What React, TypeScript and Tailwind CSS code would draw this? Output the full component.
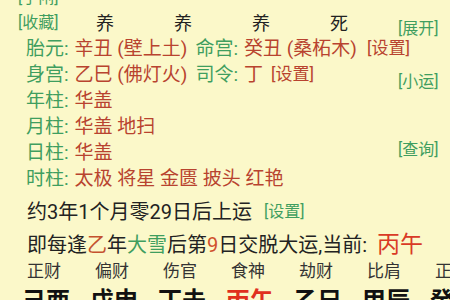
const green = "text-[#3f9e5f]";
const red = "text-[#b8432f]";

const shensha = [
  { label: "年柱:", items: ["华盖"] },
  { label: "月柱:", items: ["华盖", "地扫"] },
  { label: "日柱:", items: ["华盖"] },
  { label: "时柱:", items: ["太极", "将星", "金匮", "披头", "红艳"] },
];

const shishen = ["正财", "偏财", "伤官", "食神", "劫财", "比肩", "正官"];
const dayun = ["己酉", "戊申", "丁未", "丙午", "乙巳", "甲辰", "癸卯"];

export default function App() {
  return (
    <div className="w-[450px] h-[300px] overflow-hidden bg-[#fbf8c9] font-[family-name:Roboto,'Noto_Sans_CJK_SC',sans-serif]">
      <div className="-mt-[14px] flex">
        {/* left column */}
        <div className="flex-1 min-w-0 flex flex-col">
          <div className={`h-[24px] flex items-center pl-[18px] text-[16px] ${green}`}>[手闸]</div>
          <div className="h-[26px] flex items-center pl-[18px]">
            <span className={`text-[16px] w-[48px] ${green}`}>[收藏]</span>
            <div className="flex text-[18px] text-[#222]">
              {["养", "养", "养", "死"].map((c, i) => (
                <span key={i} className="w-[78px] text-center">
                  {c}
                </span>
              ))}
            </div>
          </div>
          <div className="h-[26px] flex items-center pl-[26px] text-[19px] whitespace-nowrap">
            <span className={green}>胎元: </span>
            <span className={`${red} ml-[6px]`}>辛丑 (壁上土)</span>
            <span className={`${green} ml-[8px]`}>命宫: </span>
            <span className={`${red} ml-[6px]`}>癸丑 (桑柘木)</span>
            <span className={`${red} ml-[10px] text-[17px]`}>[设置]</span>
          </div>
          <div className="h-[26px] flex items-center pl-[26px] text-[19px] whitespace-nowrap">
            <span className={green}>身宫: </span>
            <span className={`${red} ml-[6px]`}>乙巳 (佛灯火)</span>
            <span className={`${green} ml-[8px]`}>司令: </span>
            <span className={`${red} ml-[6px]`}>丁</span>
            <span className={`${red} ml-[8px] text-[17px]`}>[设置]</span>
          </div>
          {shensha.map((row) => (
            <div key={row.label} className="h-[26px] flex items-center pl-[26px] text-[19px] whitespace-nowrap">
              <span className={green}>{row.label}</span>
              <span className={`${red} ml-[6px]`}>{row.items.join(" ")}</span>
            </div>
          ))}
        </div>
        {/* right column */}
        <div className={`w-[52px] shrink-0 flex flex-col text-[16px] whitespace-nowrap ${green}`}>
          <div className="mt-[34px] h-[18px] leading-[18px]">[展开]</div>
          <div className="mt-[35px] h-[18px] leading-[18px]">[小运]</div>
          <div className="mt-[50px] h-[18px] leading-[18px]">[查询]</div>
        </div>
      </div>

      <div className="mt-[5px] h-[30px] flex items-center pl-[27px] text-[20px] text-[#222] whitespace-nowrap">
        约3年1个月零29日后上运
        <span className={`ml-[12px] text-[16px] ${green}`}>[设置]</span>
      </div>
      <div className="mt-[3px] h-[30px] flex items-center pl-[27px] text-[20px] text-[#222] whitespace-nowrap">
        即每逢<span className="text-[#c4512f]">乙</span>年<span className={green}>大雪</span>后第
        <span className="text-[#d0502c]">9</span>日交脱大运,当前:
        <span className="ml-[10px] text-[23px] text-[#d93a26]">丙午</span>
      </div>
      <div className="h-[24px] flex items-center pl-[27px] gap-[33px] text-[17px] text-[#333] whitespace-nowrap">
        {shishen.map((s, i) => (
          <span key={i} className="w-[35px] shrink-0">
            {s}
          </span>
        ))}
      </div>
      <div className="mt-[2px] h-[30px] flex items-center pl-[22px] gap-[20px] text-[24px] font-bold text-[#111] whitespace-nowrap">
        {dayun.map((d) => (
          <span key={d} className={`w-[48px] shrink-0 ${d === "丙午" ? "text-[#e0301e]" : ""}`}>
            {d}
          </span>
        ))}
      </div>
    </div>
  );
}
